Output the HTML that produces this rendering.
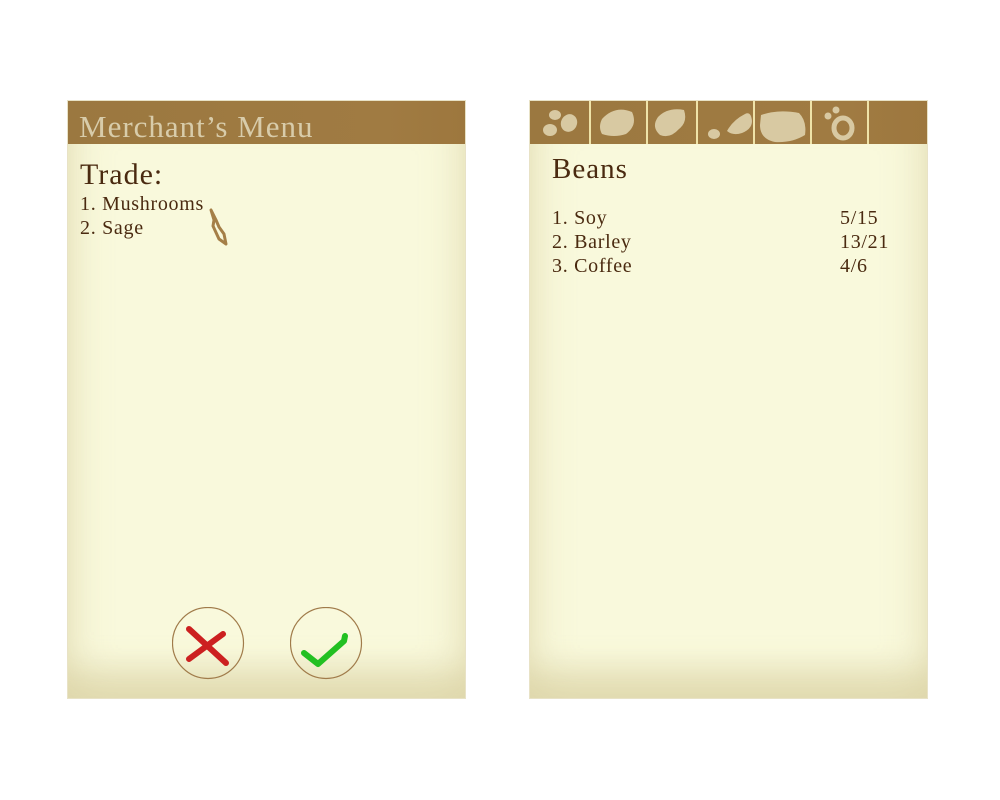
<!DOCTYPE html>
<html><head><meta charset="utf-8"><style>
body{margin:0;width:1000px;height:800px;background:#fff;position:relative;overflow:hidden;font-family:"Liberation Serif",serif;color:#4a2a10}
.p{position:absolute;top:100px;width:399px;height:599px;background:#f9f9dc;box-shadow:inset 0 0 40px 6px rgba(200,185,130,.3), inset 0 -40px 30px -10px rgba(200,185,130,.35);border:1px solid #e8e2c6;box-sizing:border-box}
.h{position:absolute;left:0;top:0;right:0;height:43px;background:linear-gradient(90deg,#9b7840,#a07b42 80%,#9d773e)}
.t{position:absolute;white-space:nowrap}
.tab{position:absolute;top:0;height:43px;width:2px;background:#efe3a8}
.i{font-size:20px;letter-spacing:.7px}
</style></head><body>
<div class="p" style="left:67px">
 <div class="h"><div class="t" style="left:11px;top:8px;font-size:31px;letter-spacing:1px;color:#d8ccaa">Merchant’s Menu</div></div>
 <div class="t" style="left:12px;top:57px;font-size:30px;letter-spacing:1px">Trade:</div>
 <div class="t i" style="left:12px;top:92px">1. Mushrooms</div>
 <div class="t i" style="left:12px;top:116px">2. Sage</div>
 <svg style="position:absolute;left:138px;top:106px" width="30" height="42"><path d="M5 3 L8 13 L7 19 L13 32 L20 37 L18 27 L13 20 L10 13 Z" fill="none" stroke="#a57f47" stroke-width="3" stroke-linejoin="round"/></svg>
 <svg style="position:absolute;left:104px;top:506px" width="74" height="74"><circle cx="36" cy="36" r="35.5" fill="none" stroke="#a07b4a" stroke-width="1.2"/><path d="M17 22 L54 56 M51 27 L17 52" stroke="#cc2020" stroke-width="6" stroke-linecap="round"/></svg>
 <svg style="position:absolute;left:222px;top:506px" width="74" height="74"><circle cx="36" cy="36" r="35.5" fill="none" stroke="#a07b4a" stroke-width="1.2"/><path d="M14 46 L28 57 L54 34 L55 29" stroke="#22c022" stroke-width="6" fill="none" stroke-linecap="round" stroke-linejoin="round"/></svg>
</div>
<div class="p" style="left:529px">
 <div class="h">
  <div class="tab" style="left:59px"></div><div class="tab" style="left:116px"></div><div class="tab" style="left:166px"></div><div class="tab" style="left:223px"></div><div class="tab" style="left:280px"></div><div class="tab" style="left:337px"></div>
  <svg style="position:absolute;left:0;top:0" width="340" height="43" fill="#d8c9a2">
   <ellipse cx="25" cy="14" rx="6" ry="5"/><ellipse cx="20" cy="29" rx="7" ry="6"/><ellipse cx="39" cy="22" rx="8" ry="9" transform="rotate(25 39 22)"/>
   <path d="M72 18 Q85 4 102 11 Q108 24 96 33 Q84 37 72 33 Q68 26 72 18 Z"/>
   <path d="M128 16 Q138 6 154 9 Q158 21 149 28 Q140 38 130 34 Q121 26 128 16 Z"/>
   <ellipse cx="184" cy="33" rx="6" ry="5"/><path d="M197 30 Q203 19 215 13 Q221 10 222 20 Q222 28 212 32 Q203 35 197 30 Z"/>
   <path d="M231 14 Q248 8 269 12 Q277 20 275 34 Q262 42 245 41 Q230 38 230 24 Z"/>
   <circle cx="298" cy="15" r="3.5"/><circle cx="306" cy="9" r="3.5"/><ellipse cx="313" cy="27" rx="9" ry="10" fill="none" stroke="#d8c9a2" stroke-width="5"/>
  </svg>
 </div>
 <div class="t" style="left:22px;top:52px;font-size:29px;letter-spacing:1px">Beans</div>
 <div class="t i" style="left:22px;top:105px;line-height:24px">1. Soy<br>2. Barley<br>3. Coffee</div>
 <div class="t i" style="left:310px;top:105px;line-height:24px">5/15<br>13/21<br>4/6</div>
</div>
</body></html>
